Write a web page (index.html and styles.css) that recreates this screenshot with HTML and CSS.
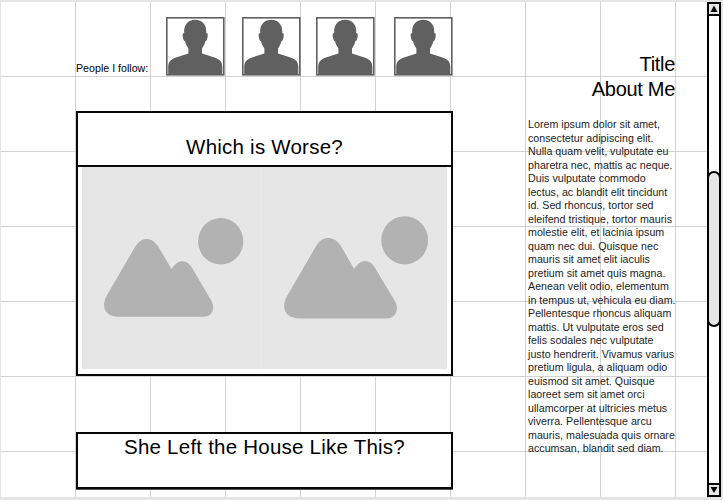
FILE: index.html
```html
<!DOCTYPE html>
<html lang="en">
<head>
<meta charset="utf-8">
<title>Which is Worse?</title>
<link rel="stylesheet" href="styles.css">
</head>
<body>
<svg class="defs" width="0" height="0" aria-hidden="true">
  <symbol id="person" viewBox="0 0 59 59">
    <rect x=".8" y=".8" width="57" height="57" fill="#fff" stroke="#606060" stroke-width="1.6"/>
    <path fill="#606060" d="M18.200 16C17.500 8 22 2.700 29.200 2.700S40.900 8 40.200 16C41.900 16 42 18 41.500 20.500C41 23 40.300 24.400 39.300 24.300C38.600 27.500 37.500 29.300 36 31.500V36.500L48.500 40.500C54.500 42.700 56.200 45 56.300 50V58H2.200V50C2.300 45 4 42.700 10 40.500L22.400 36.500V31.500C20.900 29.300 19.800 27.500 19.100 24.300C18.100 24.400 17.400 23 16.900 20.500C16.400 18 16.500 16 18.200 16Z"/>
  </symbol>
</svg>
<div class="page">
  <main class="feed">
    <section class="follow">
      <span class="label">People I follow:</span>
      <svg class="avatar first"><use href="#person"/></svg>
      <svg class="avatar second"><use href="#person"/></svg>
      <svg class="avatar third"><use href="#person"/></svg>
      <svg class="avatar fourth"><use href="#person"/></svg>
    </section>
    <article class="card">
      <h2 class="question">Which is Worse?</h2>
      <div class="photos">
        <svg class="photo left" viewBox="0 0 179 202">
          <path d="M53 80C56.500 74.500 60.500 72 64.700 72S73 74.500 76.500 80L89.700 102.300C95.500 92 104.500 92 109.700 100.300L129.500 134C133.500 142 130 149.700 121.300 149.700H36.300C23 149.700 19 140 24.500 129Z"/>
          <ellipse cx="138.700" cy="74.300" rx="22.600" ry="23.300"/>
        </svg>
        <svg class="photo right" viewBox="0 0 185 202">
          <path d="M53.500 80C57.500 73.500 61.500 71 66.200 71S75.500 73.500 79.500 80L92.200 102C98.500 91.500 107.500 92 112.500 100L132.800 134C137.500 142 134 151.500 124 151.500H38C23 151.500 19 141 24.500 130Z"/>
          <ellipse cx="142.700" cy="73.300" rx="23.400" ry="24.100"/>
        </svg>
      </div>
    </article>
    <article class="card next">
      <h2 class="question wide">She Left the House Like This?</h2>
    </article>
  </main>
  <aside class="about">
    <h1 class="heading"><span>Title</span><br>About Me</h1>
    <p class="bio">Lorem ipsum dolor sit amet,<br>consectetur adipiscing elit.<br>Nulla quam velit, vulputate eu<br>pharetra nec, mattis ac neque.<br>Duis vulputate commodo<br>lectus, ac blandit elit tincidunt<br>id. Sed rhoncus, tortor sed<br>eleifend tristique, tortor mauris<br>molestie elit, et lacinia ipsum<br>quam nec dui. Quisque nec<br>mauris sit amet elit iaculis<br>pretium sit amet quis magna.<br>Aenean velit odio, elementum<br>in tempus ut, vehicula eu diam.<br>Pellentesque rhoncus aliquam<br>mattis. Ut vulputate eros sed<br>felis sodales nec vulputate<br>justo hendrerit. Vivamus varius<br>pretium ligula, a aliquam odio<br>euismod sit amet. Quisque<br>laoreet sem sit amet orci<br>ullamcorper at ultricies metus<br>viverra. Pellentesque arcu<br>mauris, malesuada quis ornare<br>accumsan, blandit sed diam.</p>
  </aside>
  <div class="scrollbar">
    <svg class="arrow" viewBox="0 0 10 10"><path d="M5 1.500L8.500 8H1.500Z"/></svg>
    <div class="track"><div class="thumb"></div></div>
    <svg class="arrow down" viewBox="0 0 10 10"><path d="M5 8L8.500 2H1.500Z"/></svg>
  </div>
</div>
</body>
</html>
```
FILE: styles.css
```css
* { box-sizing: border-box; }
body {
  margin: 0;
  height: 500px;
  padding: 2px 3px 3px 1px;
  overflow: hidden;
  background: #e4e4e4;
  color: #000;
  font-family: "Liberation Sans", Arial, sans-serif;
}
.defs { display: block; }
h1, h2, p { margin: 0; font-weight: 400; }
.page {
  display: flex;
  height: 495px;
  background-color: #fff;
  background-image:
    linear-gradient(to right, transparent 74px, #d2d2d2 74px),
    linear-gradient(to bottom, transparent 74px, #d2d2d2 74px);
  background-size: 75px 75px;
}
.feed { width: 377px; margin-left: 75px; padding-top: 15px; }
.follow { display: flex; height: 59px; }
.label {
  width: 90px;
  padding-top: 45px;
  font-size: 10.67px;
  line-height: 13px;
  white-space: nowrap;
}
.avatar { flex: none; width: 59px; height: 59px; }
.second { margin-left: 17px; }
.third { margin-left: 15px; }
.fourth { margin-left: 19px; }
.card {
  height: 265px;
  margin-top: 35px;
  background: #fff;
  border: 2px solid #080808;
}
.question {
  height: 54px;
  padding-top: 22px;
  border-bottom: 2px solid #080808;
  font-size: 20.5px;
  line-height: 24px;
  letter-spacing: .23px;
  text-align: center;
}
.photos { display: flex; margin-left: 4px; height: 202px; }
.photo { flex: none; height: 202px; background: #e6e6e6; fill: #b2b2b2; }
.left { width: 180px; border-right: 1px solid #eaeaea; }
.right { width: 185px; }
.next { height: 57px; margin-top: 56px; box-shadow: 6px 1px 0 -0px transparent, 0 1px 0 #555; }
.wide { height: 53px; padding-top: 1px; border-bottom: 0; }
.about { width: 150px; margin-left: 75px; padding-top: 50px; }
.heading {
  padding-right: 3px;
  font-size: 20px;
  line-height: 25px;
  letter-spacing: -.3px;
  text-align: right;
}
.bio {
  margin-top: 16px;
  color: #1c1c1c;
  font-size: 10.67px;
  line-height: 13.5px;
  letter-spacing: .02px;
  white-space: nowrap;
}
.scrollbar {
  display: flex;
  flex-direction: column;
  width: 14px;
  margin-left: auto;
  margin-right: -1px;
  background: #fff;
  border: 2px solid #000;
}
.arrow { flex: none; width: 10px; height: 12px; background: #e6e6e6; border-bottom: 2px solid #000; }
.down { border-bottom: 0; border-top: 2px solid #000; }
.track { flex: 1; padding-top: 155px; }
.thumb {
  height: 156px;
  margin: 0 -2px;
  background: #e6e6e6;
  border: 2px solid #000;
  border-radius: 7px;
}
```
